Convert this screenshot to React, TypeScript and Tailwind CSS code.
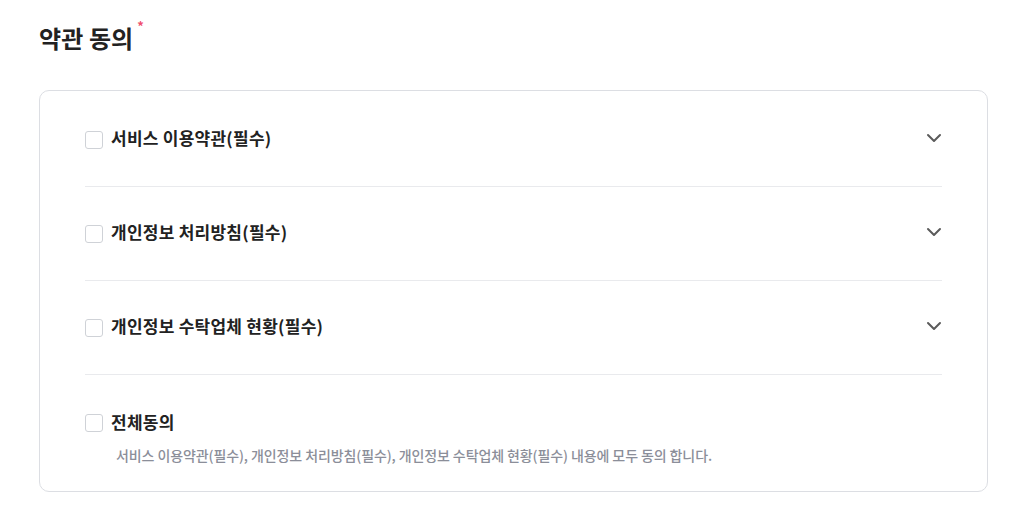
import { useState } from 'react';

const terms = [
    { id: 'service', label: '서비스 이용약관(필수)' },
    { id: 'privacy', label: '개인정보 처리방침(필수)' },
    { id: 'consign', label: '개인정보 수탁업체 현황(필수)' },
];

function Checkbox({ checked, onChange }: { checked: boolean; onChange: () => void }) {
    return (
        <button
            type="button"
            onClick={onChange}
            className={`w-[18px] h-[18px] shrink-0 rounded-[3px] border ${checked ? 'border-[#222] bg-[#222]' : 'border-[#cfd2d7] bg-white'}`}
        />
    );
}

function Chevron() {
    return (
        <svg width="16" height="16" viewBox="0 0 16 16" fill="none" className="-mt-[3px]">
            <path d="M2 5 L8 11 L14 5" stroke="#5b5b5b" strokeWidth="2" strokeLinecap="round" strokeLinejoin="round" />
        </svg>
    );
}

export default function App() {
    const [checked, setChecked] = useState<Record<string, boolean>>({});
    const allChecked = terms.every((t) => checked[t.id]);

    const toggle = (id: string) => setChecked((prev) => ({ ...prev, [id]: !prev[id] }));
    const toggleAll = () => {
        const next: Record<string, boolean> = {};
        terms.forEach((t) => (next[t.id] = !allChecked));
        setChecked(next);
    };

    return (
        <div className="min-h-screen bg-white pl-[39px] pt-[22px] font-['Noto_Sans_CJK_KR','Noto_Sans',sans-serif] text-[#222]">
            <h2 className="flex items-start text-[24px] leading-[32px] font-bold tracking-[0.1px]">
                약관 동의
                <span className="ml-[4px] -mt-[6px] text-[13px] leading-[20px] text-[#f0506e]">*</span>
            </h2>

            <div className="mt-[36px] w-[949px] rounded-[10px] border border-[#dcdee3] px-[45px] pt-[2px]">
                {terms.map((t) => (
                    <div key={t.id} className="flex h-[94px] items-center justify-between border-b border-[#e9eaed]">
                        <label className="flex items-center gap-[8px] cursor-pointer">
                            <Checkbox checked={!!checked[t.id]} onChange={() => toggle(t.id)} />
                            <span className="-mt-[3px] text-[17px] leading-[24px] font-semibold tracking-[0.25px]">{t.label}</span>
                        </label>
                        <Chevron />
                    </div>
                ))}

                <div className="pt-[39px] pb-[26px]">
                    <label className="flex items-center gap-[8px] h-[18px] cursor-pointer">
                        <Checkbox checked={allChecked} onChange={toggleAll} />
                        <span className="-mt-[2px] text-[17px] leading-[24px] font-semibold tracking-[0.25px]">전체동의</span>
                    </label>
                    <p className="mt-[13px] pl-[31px] text-[14px] leading-[20px] font-medium text-[#8b8e99] tracking-[-0.1px]">
                        서비스 이용약관(필수), 개인정보 처리방침(필수), 개인정보 수탁업체 현황(필수) 내용에 모두 동의 합니다.
                    </p>
                </div>
            </div>
        </div>
    );
}
